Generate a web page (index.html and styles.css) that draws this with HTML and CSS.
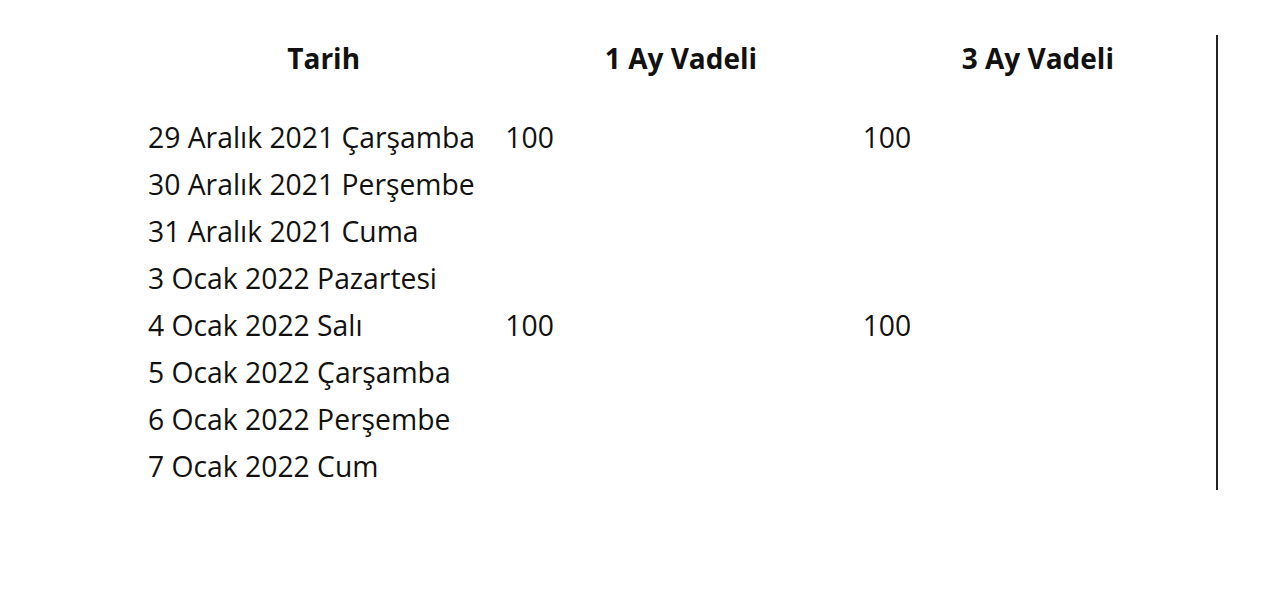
FILE: index.html
```html
<!DOCTYPE html>
<html lang="tr">
<head>
<meta charset="utf-8">
<title>Vadeli</title>
<link rel="stylesheet" href="styles.css">
</head>
<body>
<table class="rates">
  <thead>
    <tr>
      <th>Tarih</th>
      <th>1 Ay Vadeli</th>
      <th>3 Ay Vadeli</th>
    </tr>
  </thead>
  <tbody>
    <tr><td>29 Aralık 2021 Çarşamba</td><td>100</td><td>100</td></tr>
    <tr><td>30 Aralık 2021 Perşembe</td><td></td><td></td></tr>
    <tr><td>31 Aralık 2021 Cuma</td><td></td><td></td></tr>
    <tr><td>3 Ocak 2022 Pazartesi</td><td></td><td></td></tr>
    <tr><td>4 Ocak 2022 Salı</td><td>100</td><td>100</td></tr>
    <tr><td>5 Ocak 2022 Çarşamba</td><td></td><td></td></tr>
    <tr><td>6 Ocak 2022 Perşembe</td><td></td><td></td></tr>
    <tr><td>7 Ocak 2022 Cum</td><td></td><td></td></tr>
  </tbody>
</table>
</body>
</html>
```

FILE: styles.css
```css
html, body {
  margin: 0;
  padding: 0;
  background: #ffffff;
}

body {
  font-family: "Open Sans", "Noto Sans", sans-serif;
  color: #111111;
}

.rates {
  margin: 35px 0 0 145px;
  width: 1073px;
  table-layout: fixed;
  border-collapse: collapse;
  border-right: 2px solid #222222;
}

.rates th {
  font-size: 28px;
  font-weight: 700;
  text-align: center;
  line-height: 36px;
  padding: 5px 3px 38px;
}

.rates td {
  font-size: 28.3px;
  font-weight: 400;
  text-align: left;
  line-height: 47px;
  height: 47px;
  padding: 0 3px;
  white-space: nowrap;
}
```
